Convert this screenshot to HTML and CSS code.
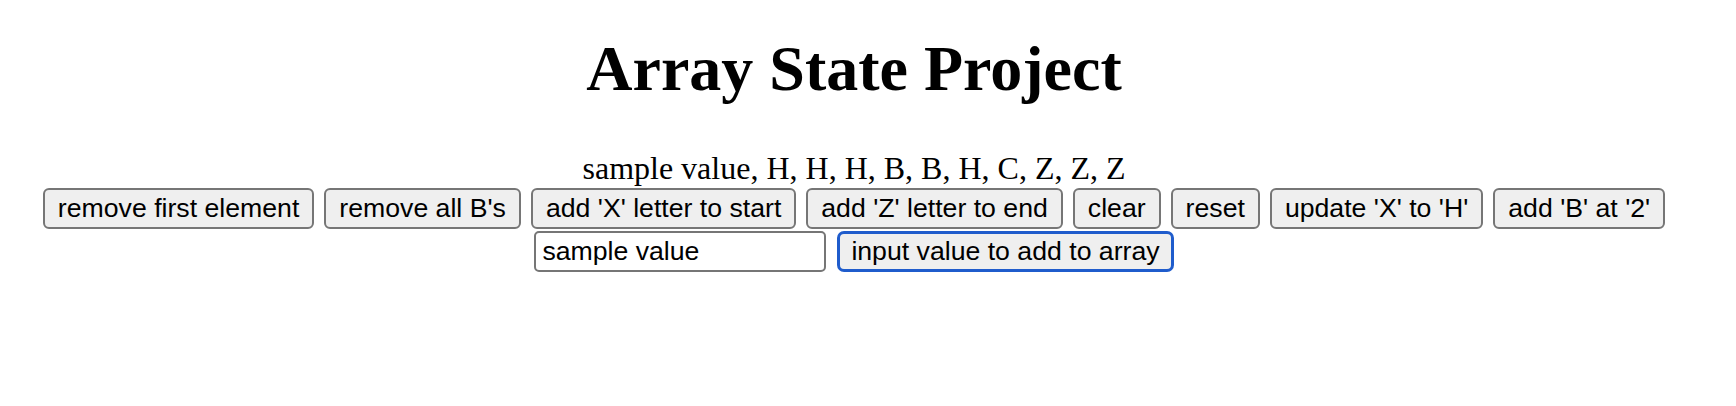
FILE: index.html
```html
<!DOCTYPE html>
<html>
<head>
<meta charset="utf-8">
<title>Array State Project</title>
<link rel="stylesheet" href="styles.css">
</head>
<body>
<div class="page">
  <h1 class="title">Array State Project</h1>
  <div class="values">sample value, H, H, H, B, B, H, C, Z, Z, Z</div>
  <div class="actions">
    <button class="btn">remove first element</button>
    <button class="btn">remove all B's</button>
    <button class="btn">add 'X' letter to start</button>
    <button class="btn">add 'Z' letter to end</button>
    <button class="btn">clear</button>
    <button class="btn">reset</button>
    <button class="btn">update 'X' to 'H'</button>
    <button class="btn">add 'B' at '2'</button>
  </div>
  <div class="entry">
    <input class="field" type="text" value="sample value">
    <button class="btn btn-focused">input value to add to array</button>
  </div>
</div>
</body>
</html>
```

FILE: styles.css
```css
html, body {
  margin: 0;
  padding: 0;
  background: #ffffff;
}

.page {
  width: 1708px;
  display: flex;
  flex-direction: column;
  align-items: center;
  font-family: "Liberation Serif", "Times New Roman", serif;
  color: #000000;
}

.title {
  margin: 32px 0 0 0;
  font-size: 64px;
  line-height: 74px;
  font-weight: bold;
}

.values {
  margin-top: 44px;
  font-size: 32px;
  line-height: 37px;
  height: 37px;
}

.actions {
  margin-top: 1px;
  display: flex;
  justify-content: center;
  gap: 10px;
}

.entry {
  margin-top: 2px;
  display: flex;
  justify-content: center;
  gap: 11px;
}

.btn {
  box-sizing: border-box;
  height: 41px;
  margin: 0;
  padding: 0 13px;
  font-family: "Liberation Sans", Arial, sans-serif;
  font-size: 26.67px;
  line-height: 37px;
  color: #000000;
  background: #efefef;
  border: 2px solid #767676;
  border-radius: 6px;
  white-space: nowrap;
}

.btn-focused {
  border: 3px solid #1f5ccc;
  padding: 0 11px;
  line-height: 35px;
  border-radius: 7px;
}

.field {
  box-sizing: border-box;
  width: 292px;
  height: 41px;
  margin: 0;
  padding: 0 6px;
  font-family: "Liberation Sans", Arial, sans-serif;
  font-size: 26.67px;
  color: #000000;
  background: #ffffff;
  border: 2px solid #767676;
  border-radius: 5px;
  outline: none;
}
```
